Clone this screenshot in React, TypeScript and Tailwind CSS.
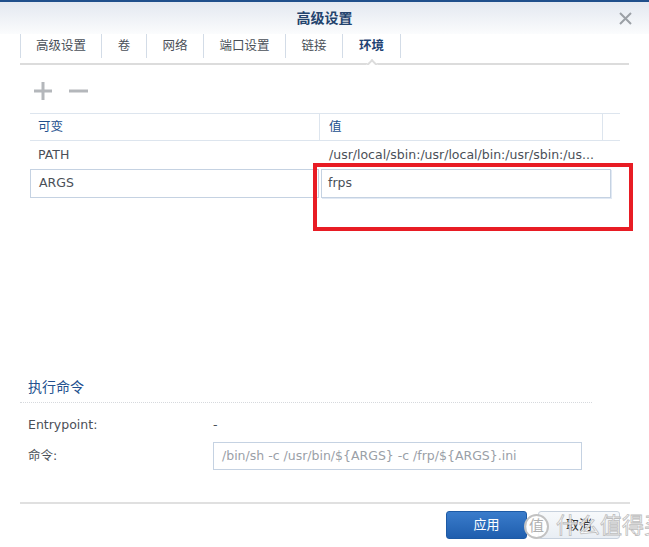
import React from "react";

const tabs = [
    { label: "高级设置", w: "w-[81px]" },
    { label: "卷", w: "w-[45px]" },
    { label: "网络", w: "w-[57px]" },
    { label: "端口设置", w: "w-[82px]" },
    { label: "链接", w: "w-[57px]" },
    { label: "环境", w: "w-[58px]", active: true },
];

export default function App() {
    return (
        <div
            className="relative w-[649px] h-[547px] overflow-hidden bg-white text-[12.5px] text-[#333]"
            style={{ fontFamily: '"DejaVu Sans", "Noto Sans CJK SC", sans-serif' }}
        >
            {/* Header */}
            <div className="h-[34px] border-t-2 border-[#1f4f8b] bg-gradient-to-b from-[#e3e8f0] to-[#fbfcfd] flex items-center justify-center relative">
                <span className="text-[14px] font-bold text-[#23436d]">高级设置</span>
                <svg className="absolute right-[17px] top-[10px]" width="13" height="13" viewBox="0 0 13 13">
                    <path d="M1 1 L12 12 M12 1 L1 12" stroke="#9ba0a6" strokeWidth="2" />
                </svg>
            </div>

            {/* Tabs */}
            <div className="mx-[20px] h-[31px] border-b-2 border-[#dcdcdc] flex items-start relative">
                {tabs.map((t) => (
                    <div
                        key={t.label}
                        className={`${t.w} h-[24px] border-l border-[#d3dce7] flex items-center justify-center ${t.active ? "font-bold text-[#1f4474]" : "text-[#4a5058]"}`}
                    >
                        {t.label}
                    </div>
                ))}
                <div className="h-[24px] border-l border-[#d3dce7]" />
                {/* caret under active tab */}
                <div className="absolute left-[345px] bottom-[-2px] w-[14px] h-[7px] overflow-hidden">
                    <div className="w-[10px] h-[10px] bg-white border-l-2 border-t-2 border-[#dcdcdc] rotate-45 mt-[3px] ml-[2px]" />
                </div>
            </div>

            {/* Toolbar */}
            <div className="ml-[33px] mt-[16px] flex items-center gap-[15px] h-[20px]">
                <svg width="20" height="20" viewBox="0 0 20 20">
                    <path d="M10 1 V19 M1 10 H19" stroke="#b4b7bb" strokeWidth="3" />
                </svg>
                <svg width="21" height="20" viewBox="0 0 21 20">
                    <path d="M1 10 H20" stroke="#b4b7bb" strokeWidth="3" />
                </svg>
            </div>

            {/* Table */}
            <div className="ml-[30px] mr-[29px] mt-[12px]">
                <div className="flex h-[28px] border-t border-b border-[#dde5ee]">
                    <div className="w-[290px] flex items-center pl-[8px] text-[#22508e] border-r border-[#dde5ee]">可变</div>
                    <div className="w-[283px] flex items-center pl-[9px] text-[#22508e] border-r border-[#dde5ee]">值</div>
                    <div className="flex-1" />
                </div>
                <div className="flex h-[28px] items-center">
                    <div className="w-[290px] pl-[8px] text-[#4a4f57]">PATH</div>
                    <div className="w-[283px] pl-[9px] text-[#4a4f57] whitespace-nowrap overflow-hidden">/usr/local/sbin:/usr/local/bin:/usr/sbin:/us...</div>
                </div>
                <div className="flex h-[29px]">
                    <div className="w-[289px] border border-[#c5d2e2] bg-white flex items-center pl-[8px] text-[#4a4f57]">ARGS</div>
                    <div className="w-[290px] ml-[2px] border border-[#c5d2e2] shadow-[1px_1px_0_#e1e9f4] bg-white flex items-center pl-[6px] text-[#4a4f57]">frps</div>
                </div>
            </div>

            {/* Exec command section */}
            <div className="ml-[28px] mt-[179px] text-[14px] text-[#22508e] h-[20px] flex items-center">执行命令</div>
            <div className="ml-[20px] w-[572px] mt-[5px] border-t border-dotted border-[#d6d9dd]" />
            <div className="ml-[28px] mt-[13px] flex items-center h-[18px] text-[#4a4f57]">
                <span className="w-[185px]">Entrypoint:</span>
                <span>-</span>
            </div>
            <div className="ml-[28px] mt-[8px] flex items-center h-[28px] text-[#4a4f57]">
                <span className="w-[185px]">命令:</span>
                <div className="w-[369px] h-[28px] border border-[#c5d2e2] flex items-center pl-[8px] text-[#9aa0a7] whitespace-nowrap">
                    /bin/sh -c /usr/bin/${"{ARGS}"} -c /frp/${"{ARGS}"}.ini
                </div>
            </div>

            {/* Footer */}
            <div className="ml-[20px] mr-[19px] mt-[32px] border-t-2 border-[#e0e0e0]" />
            <div className="flex justify-end gap-[11px] mr-[29px] mt-[7px]">
                <button className="w-[81px] h-[28px] rounded-[3px] border border-[#1d5aa5] bg-gradient-to-b from-[#3a7ccb] to-[#1f5eae] text-white text-[13px]">
                    应用
                </button>
                <button className="w-[82px] h-[28px] rounded-[3px] border border-[#c7d1dd] bg-gradient-to-b from-[#f7f9fb] to-[#e9eef4] text-[#333] text-[13px]">
                    取消
                </button>
            </div>

            {/* Red annotation box */}
            <div className="absolute left-[313px] top-[163px] w-[320px] h-[68px] border-4 border-[#e81c24]" />

            {/* Watermark */}
            <div className="absolute left-[524px] top-[513px] flex items-center gap-[7px] whitespace-nowrap pointer-events-none">
                <div className="shrink-0 w-[25px] h-[25px] rounded-full bg-white/90 border-2 border-[#c2c2c2] flex items-center justify-center text-[15px] text-[#b0b0b0]">值</div>
                <span className="text-[22px] leading-[26px] text-white/80" style={{ WebkitTextStroke: "0.8px #bdbdbd" }}>什么值得买</span>
            </div>
        </div>
    );
}
